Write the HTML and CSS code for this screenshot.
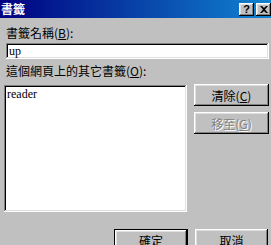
FILE: index.html
```html
<!DOCTYPE html>
<html lang="zh-Hant">
<head>
    <meta charset="UTF-8">
    <title>書籤</title>
    <link rel="stylesheet" href="styles.css">
</head>
<body>
    <div class="window">
        <div class="titlebar">
            <span class="title">書籤</span>
            <div class="title_buttons">
                <span class="title_btn">?</span>
                <span class="title_btn close">
                    <svg width="8" height="7" viewBox="0 0 8 7"><path d="M0 0h2l2 2 2-2h2L5 3.5 8 7H6L4 5 2 7H0l3-3.5z" fill="#000"/></svg>
                </span>
            </div>
        </div>
        <div class="content">
            <div class="label label_name">書籤名稱(<u>B</u>):</div>
            <div class="field name_field">up</div>
            <div class="label label_list">這個網頁上的其它書籤(<u>O</u>):</div>
            <div class="list_row">
                <div class="field listbox">reader</div>
                <div class="side_buttons">
                    <div class="button">清除(<u>C</u>)</div>
                    <div class="button disabled">移至(<u>G</u>)</div>
                </div>
            </div>
            <div class="footer">
                <div class="button default">確定</div>
                <div class="button cancel">取消</div>
            </div>
        </div>
    </div>
</body>
</html>
```

FILE: styles.css
```css
* {
    margin: 0;
    padding: 0;
    box-sizing: border-box;
}
body {
    background-color: #c0c0c0;
    font-family: "Noto Sans CJK TC", "Liberation Sans", sans-serif;
    font-size: 12px;
    color: #000;
    overflow: hidden;
}
.window {
    width: 271px;
    height: 245px;
    background-color: #c0c0c0;
}
.titlebar {
    height: 18px;
    display: flex;
    align-items: center;
    justify-content: space-between;
    background: linear-gradient(to right, #000080, #1084d0);
    padding: 0 0 0 1px;
}
.title {
    color: #fff;
    font-weight: bold;
    font-size: 12px;
    line-height: 14px;
}
.title_buttons {
    display: flex;
    gap: 2px;
    padding-top: 1px;
}
.title_btn {
    width: 15px;
    height: 13px;
    display: flex;
    align-items: center;
    justify-content: center;
    background-color: #c0c0c0;
    box-shadow: inset -1px -1px #000, inset 1px 1px #fff, inset -2px -2px #808080, inset 2px 2px #dfdfdf;
    font-family: "Liberation Sans", sans-serif;
    font-weight: bold;
    font-size: 11px;
    line-height: 11px;
}
.content {
    padding: 0 2px 0 4px;
}
.label {
    line-height: 14px;
    padding-left: 2px;
}
.label_name {
    margin-top: 8px;
}
.label_list {
    margin-top: 5px;
}
.field {
    background-color: #fff;
    box-shadow: inset -1px -1px #fff, inset 1px 1px #808080, inset -2px -2px #dfdfdf, inset 2px 2px #000;
    font-family: "Liberation Serif", serif;
    font-size: 12px;
    line-height: 12px;
}
.name_field {
    margin: 3px 0 0 2px;
    width: 263px;
    height: 16px;
    padding: 2px 3px;
}
.list_row {
    display: flex;
    gap: 7px;
    margin-top: 6px;
}
.listbox {
    width: 184px;
    height: 127px;
    margin-top: 1px;
    padding: 3px 3px;
}
.side_buttons {
    display: flex;
    flex-direction: column;
    gap: 6px;
}
.button {
    width: 75px;
    height: 22px;
    display: flex;
    align-items: center;
    justify-content: center;
    background-color: #c0c0c0;
    box-shadow: inset -1px -1px #000, inset 1px 1px #fff, inset -2px -2px #808080, inset 2px 2px #dfdfdf;
    font-size: 12px;
}
.button.disabled {
    color: #808080;
    text-shadow: 1px 1px #fff;
}
.footer {
    display: flex;
    justify-content: flex-end;
    gap: 7px;
    margin-top: 17px;
    padding-right: 1px;
}
.button.default {
    width: 74px;
    box-shadow: inset 0 0 0 1px #000, inset -2px -2px #000, inset 2px 2px #fff, inset -3px -3px #808080, inset 3px 3px #dfdfdf;
}
.button.cancel {
    width: 73px;
}
```
